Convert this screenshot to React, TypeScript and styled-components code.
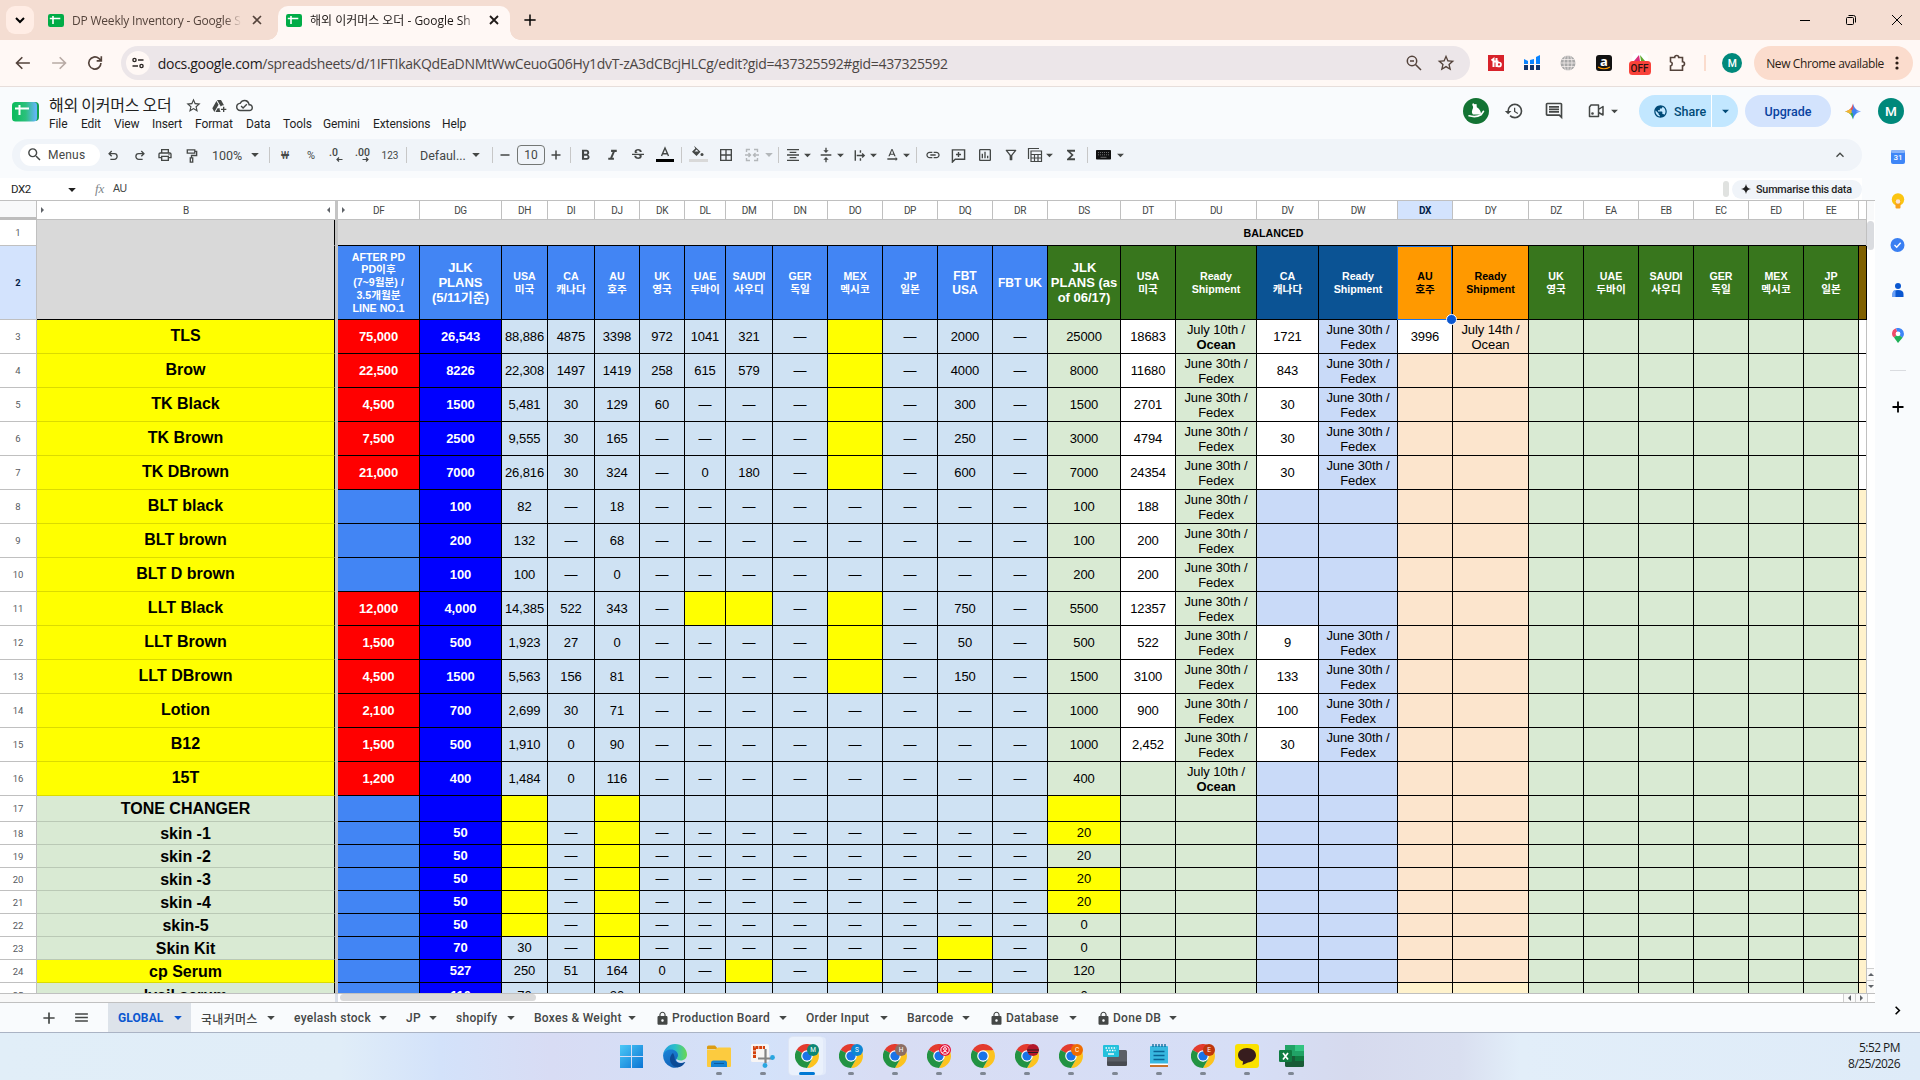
import type { ReactNode } from "react";
import styled, { createGlobalStyle, css } from "styled-components";
import * as Md from "react-icons/md";

const GlobalStyle = createGlobalStyle`
  * {
    box-sizing: border-box;
  }
  body {
    margin: 0;
    overflow: hidden;
    background: #f9fbfd;
    font-family: Roboto, "Noto Sans CJK KR", sans-serif;
  }
  svg {
    display: block;
    flex: none;
  }
`;

const Screen = styled.div`
  width: 1920px;
  height: 1080px;
  display: flex;
  flex-direction: column;
  overflow: hidden;
`;

/* ---------- browser ---------- */

const TabStrip = styled.div`
  height: 40px;
  background: #f4ddd2;
  display: flex;
  padding: 6px 0 0 6px;
  font-family: "Open Sans", "Noto Sans CJK KR", sans-serif;
`;

const TabSearch = styled.div`
  width: 28px;
  height: 28px;
  border-radius: 9px;
  background: #ffede5;
  display: flex;
  align-items: center;
  justify-content: center;
  margin-right: 6px;
`;

const BrowserTab = styled.div<{ $active?: boolean }>`
  width: ${(p) => (p.$active ? 232 : 238)}px;
  height: 34px;
  padding: 0 8px 6px;
  display: flex;
  align-items: center;
  position: relative;
  border-radius: 10px 10px 0 0;
  color: ${(p) => (p.$active ? "#1f1a18" : "#54433b")};
  background: ${(p) => (p.$active ? "#fff8f5" : "transparent")};
  ${(p) =>
    p.$active &&
    css`
      &::before,
      &::after {
        content: "";
        position: absolute;
        bottom: 0;
        width: 10px;
        height: 10px;
      }
      &::before {
        left: -10px;
        background: radial-gradient(circle at 0 0, transparent 9.5px, #fff8f5 10px);
      }
      &::after {
        right: -10px;
        background: radial-gradient(circle at 100% 0, transparent 9.5px, #fff8f5 10px);
      }
    `}
`;

const TabTitle = styled.div<{ $spacing: number }>`
  width: 170px;
  margin: 0 7px 0 8px;
  white-space: nowrap;
  font-size: 12px;
  letter-spacing: ${(p) => p.$spacing}px;
  mask-image: linear-gradient(to right, #000 90%, transparent);
`;

const NewTab = styled.div`
  padding: 5px 0 0 11px;
`;

const WindowButtons = styled.div`
  margin-left: auto;
  display: flex;
  height: 28px;
  svg {
    width: 46px;
    height: 28px;
  }
`;

const AddressRow = styled.div`
  height: 47px;
  background: #fff8f5;
  border-bottom: 1px solid #e7dedb;
  display: flex;
  align-items: center;
  padding: 0 7px 0 12px;
  color: #54433b;
  font-family: "Open Sans", sans-serif;
`;

const NavIcons = styled.div`
  display: flex;
  gap: 14px;
  width: 109px;
`;

const Omnibox = styled.div`
  width: 1351px;
  height: 34px;
  border-radius: 17px;
  background: #ece6e9;
  display: flex;
  align-items: center;
  gap: 13px;
  padding: 0 14px 0 5px;
`;

const SiteInfo = styled.div`
  width: 24px;
  height: 24px;
  border-radius: 50%;
  background: #fff8f5;
  display: flex;
  align-items: center;
  justify-content: center;
`;

const Url = styled.div`
  margin-left: -5px;
  flex: 1;
  font-size: 14px;
  letter-spacing: -0.32px;
  color: #4b4543;
  white-space: nowrap;
  b {
    font-weight: 400;
    color: #1c1a19;
  }
`;

const Extensions = styled.div`
  display: flex;
  align-items: center;
  margin-left: 18px;
`;

const Extension = styled.div<{ $w?: number; $drop?: number }>`
  width: ${(p) => p.$w ?? 36}px;
  padding-top: ${(p) => p.$drop ?? 0}px;
`;

const ExtensionDivider = styled.div`
  width: 2px;
  height: 16px;
  background: #fbdccd;
  margin: 0 16px 0 0;
`;

const Avatar = styled.div<{ $size: number }>`
  width: ${(p) => p.$size}px;
  height: ${(p) => p.$size}px;
  border-radius: 50%;
  background: #00897b;
  color: #fff;
  display: flex;
  align-items: center;
  justify-content: center;
  font: 500 ${(p) => p.$size * 0.52}px Roboto, sans-serif;
`;

const UpdatePill = styled.div`
  margin-left: 12px;
  width: 159px;
  height: 34px;
  border-radius: 17px;
  background: #fbdccd;
  color: #2b1c14;
  display: flex;
  align-items: center;
  padding-left: 12px;
  font-size: 12px;
  letter-spacing: -0.38px;
  white-space: nowrap;
  svg {
    margin-left: auto;
    margin-right: 7px;
  }
`;

/* ---------- document header ---------- */

const Workspace = styled.div`
  display: flex;
  height: 945px;
`;

const Main = styled.div`
  width: 1875px;
`;

const DocHeader = styled.div`
  height: 52px;
  display: flex;
  padding: 8px 0 0 12px;
  width: 1904px;
`;

const LogoBox = styled.div`
  padding-top: 7px;
`;

const DocTitle = styled.div`
  width: 1414px;
  margin-left: 10px;
`;

const TitleLine = styled.div`
  display: flex;
  align-items: center;
  height: 21px;
  color: #444746;
  svg {
    margin-right: 9px;
  }
`;

const TitleText = styled.div`
  width: 136px;
  padding-bottom: 4px;
  font: 400 16px "Noto Sans CJK KR", sans-serif;
  letter-spacing: -0.25px;
  color: #1f1f1f;
  white-space: nowrap;
`;

const MenuBar = styled.div`
  display: flex;
  height: 16px;
  align-items: center;
  font-size: 12px;
  letter-spacing: -0.1px;
  color: #1f1f1f;
`;

const MenuItem = styled.div<{ $w: number }>`
  width: ${(p) => p.$w}px;
  white-space: nowrap;
`;

const HeaderActions = styled.div`
  display: flex;
  align-items: center;
  height: 32px;
  color: #444746;
`;

const Collaborator = styled.div`
  width: 26px;
  height: 26px;
  border-radius: 50%;
  background: #137333;
  margin-right: 15px;
`;

const ActionIcon = styled.div<{ $w: number }>`
  width: ${(p) => p.$w}px;
  display: flex;
  align-items: center;
  gap: 5px;
`;

const ShareButton = styled.div`
  display: flex;
  width: 99px;
  height: 32px;
  border-radius: 16px;
  overflow: hidden;
  background: #c2e7ff;
  color: #004a77;
  font-size: 12.5px;
  font-weight: 500;
`;

const ShareLabel = styled.div`
  width: 73px;
  border-right: 1px solid #fff;
  display: flex;
  align-items: center;
  gap: 6px;
  padding-left: 14px;
`;

const ShareArrow = styled.div`
  flex: 1;
  display: flex;
  align-items: center;
  justify-content: center;
`;

const UpgradeButton = styled.div`
  width: 86px;
  height: 32px;
  border-radius: 16px;
  background: #d3e3fd;
  color: #0842a0;
  margin: 0 0 0 7px;
  display: flex;
  align-items: center;
  justify-content: center;
  font-size: 12.5px;
  font-weight: 500;
`;

const GeminiButton = styled.div`
  padding: 0 17px 0 14px;
`;

/* ---------- toolbar ---------- */

const Toolbar = styled.div`
  margin: 0 13px 0 12px;
  height: 32px;
  border-radius: 16px;
  background: #f0f4f9;
  display: flex;
  align-items: center;
  padding: 0 12px 0 8px;
  color: #444746;
`;

const MenusSearch = styled.div`
  width: 80px;
  height: 22px;
  border-radius: 11px;
  background: #fff;
  display: flex;
  align-items: center;
  gap: 5px;
  padding: 0 0 1px 6px;
  font-size: 12px;
  letter-spacing: 0.2px;
`;

const Tool = styled.div<{ $ml?: number; $w?: number; $faded?: boolean; $size?: number; $end?: boolean }>`
  width: ${(p) => p.$w ?? 20}px;
  margin-left: ${(p) => (p.$end ? "auto" : `${p.$ml ?? 0}px`)};
  opacity: ${(p) => (p.$faded ? 0.35 : 1)};
  font-size: ${(p) => p.$size ?? 12.5}px;
  display: flex;
  align-items: center;
  justify-content: center;
  flex: none;
  white-space: nowrap;
`;

const ToolLabel = styled(Tool)`
  justify-content: flex-start;
`;

const ToolDivider = styled.div<{ $ml: number }>`
  width: 1px;
  height: 16px;
  background: #c7c7c7;
  margin-left: ${(p) => p.$ml}px;
`;

const FontSize = styled.div`
  width: 28px;
  height: 20px;
  margin-left: 2px;
  border: 1px solid #747775;
  border-radius: 4px;
  display: flex;
  align-items: center;
  justify-content: center;
  font-size: 12px;
`;

/* ---------- formula bar ---------- */

const FormulaBar = styled.div`
  margin-top: 7px;
  width: 1862px;
  height: 22px;
  background: #fff;
  display: flex;
  align-items: center;
  font-size: 11.5px;
  color: #444746;
  padding-left: 11px;
`;

const NameBox = styled.div`
  width: 84px;
  display: flex;
  align-items: center;
  color: #1f1f1f;
  letter-spacing: -0.4px;
  svg {
    margin: 1px 0 0 36px;
  }
`;

const Fx = styled.div`
  width: 18px;
  font: italic 13px "Liberation Serif", serif;
  color: #80868b;
`;

const FormulaText = styled.div`
  flex: 1;
  padding-bottom: 2px;
  font-family: "Liberation Sans", sans-serif;
  font-size: 10.5px;
  letter-spacing: -0.5px;
`;

const FormulaHandle = styled.div`
  width: 6px;
  height: 16px;
  border-radius: 3px;
  background: #e0e2e0;
  margin-right: 3px;
`;

const Summarise = styled.div`
  width: 130px;
  height: 19px;
  border-radius: 10px;
  background: #f0f4f9;
  color: #1f1f1f;
  display: flex;
  align-items: center;
  gap: 5px;
  padding-left: 9px;
  font-size: 10.8px;
  letter-spacing: -0.2px;
  font-weight: 500;
  white-space: nowrap;
`;

/* ---------- sheet ---------- */

const COLS = [82, 82, 46, 47, 45, 45, 41, 47, 55, 55, 55, 55, 55, 73, 55, 81, 62, 79, 55, 76, 55, 55, 55, 55, 55, 55, 8];
const NAMES = "DF DG DH DI DJ DK DL DM DN DO DP DQ DR DS DT DU DV DW DX DY DZ EA EB EC ED EE".split(" ");
const TEMPLATE = "37px 298px 3px " + COLS.map((w) => w + "px").join(" ");

const SheetArea = styled.div`
  border-top: 1px solid #c0c0c0;
  height: 793px;
  display: flex;
  background: #fff;
`;

const Grid = styled.div`
  width: 1867px;
  height: 792px;
  overflow: hidden;
  font-family: "Liberation Sans", "Noto Sans CJK KR", sans-serif;
`;

const SheetRow = styled.div<{ $h: number }>`
  display: grid;
  grid-template-columns: ${TEMPLATE};
  height: ${(p) => p.$h}px;
`;

const ColHead = styled.div<{ $on?: boolean }>`
  border-right: 1px solid #c0c0c0;
  border-bottom: 1px solid #c0c0c0;
  background: ${(p) => (p.$on ? "#d3e3fd" : "#fff")};
  color: ${(p) => (p.$on ? "#041e49" : "#444746")};
  font: ${(p) => (p.$on ? 700 : 400)} 10px Roboto, sans-serif;
  letter-spacing: -0.4px;
  display: flex;
  align-items: center;
  justify-content: center;
`;

const Corner = styled.div`
  background: #f8f9fa;
  border-right: 1px solid #c0c0c0;
  border-bottom: 3px solid #bdbdbd;
`;

const HeadB = styled(ColHead)`
  justify-content: space-between;
  padding: 0 2px;
  border-right: none;
`;

const HeadDF = styled(ColHead)`
  justify-content: flex-start;
  padding-left: 2px;
  gap: 25px;
`;

const Freeze = styled.div`
  background: #c4c4c4;
`;

const RowHead = styled.div<{ $on?: boolean }>`
  border-right: 1px solid #c0c0c0;
  border-bottom: 1px solid #c0c0c0;
  background: ${(p) => (p.$on ? "#d3e3fd" : "#fff")};
  color: ${(p) => (p.$on ? "#041e49" : "#575b5f")};
  font: ${(p) => (p.$on ? 700 : 400)} 9.5px Roboto, sans-serif;
  display: flex;
  align-items: center;
  justify-content: center;
`;

const NameCell = styled.div<{ $bg: string; $line?: string; $low?: boolean }>`
  background: ${(p) => p.$bg};
  border-right: 1px solid #000;
  border-bottom: 1px solid ${(p) => p.$line ?? "rgba(0, 0, 0, 0.14)"};
  display: flex;
  align-items: center;
  justify-content: center;
  padding: ${(p) => (p.$low ? "1px 0 0" : "0 0 1px")};
  font-size: 16px;
  font-weight: 700;
  color: #000;
`;

const Cell = styled.div<{ $bg: string; $fg?: string; $bold?: boolean; $raise?: boolean }>`
  background: ${(p) => p.$bg};
  color: ${(p) => p.$fg ?? "#000"};
  font-weight: ${(p) => (p.$bold ? 700 : 400)};
  border-right: 1px solid #000;
  border-bottom: 1px solid #000;
  padding-bottom: ${(p) => (p.$raise ? 2 : 0)}px;
  display: flex;
  align-items: center;
  justify-content: center;
  text-align: center;
  white-space: pre;
  font-size: 13px;
  letter-spacing: -0.1px;
  line-height: 15px;
`;

const HeaderCell = styled(Cell)<{ $size?: number }>`
  font-weight: 700;
  font-size: ${(p) => p.$size ?? 10.67}px;
  line-height: ${(p) => (p.$size ? p.$size + 2 : 12.8)}px;
  letter-spacing: 0;
  position: relative;
`;

const BalancedBand = styled.div`
  grid-column: 4 / -1;
  background: #d9d9d9;
  border-bottom: 1px solid #000;
  padding-left: 342px;
  display: flex;
  align-items: center;
  justify-content: center;
  font-size: 10.67px;
  font-weight: 700;
`;

const Selection = styled.div`
  position: absolute;
  inset: 0 0 -1px -1px;
  border: 1px solid #1a73e8;
  &::after {
    content: "";
    position: absolute;
    right: -6px;
    bottom: -6px;
    width: 9px;
    height: 9px;
    border-radius: 50%;
    background: #0b57d0;
    border: 1px solid #fff;
    z-index: 2;
  }
`;

const VScroll = styled.div`
  width: 8px;
  border-left: 1px solid #c0c0c0;
  margin-left: -1px;
  display: flex;
  flex-direction: column;
  align-items: center;
  padding-top: 20px;
  background: linear-gradient(#f8f9fa 19px, #fff 19px);
`;

const VThumb = styled.div`
  width: 7px;
  height: 29px;
  border-radius: 4px;
  background: #dadce0;
  margin-bottom: auto;
`;

const ScrollArrow = styled.div<{ $w: number; $h: number }>`
  width: ${(p) => p.$w}px;
  height: ${(p) => p.$h}px;
  border: 1px solid #cfcfcf;
  border-width: ${(p) => (p.$w > p.$h ? "0 0 0 1px" : "1px 0 0 0")};
  background: #fafafa;
  display: flex;
  align-items: center;
  justify-content: center;
`;

const HScroll = styled.div`
  height: 10px;
  border: 1px solid #c0c0c0;
  border-width: 1px 0;
  display: flex;
  background: #fff;
`;

const HFrozen = styled.div`
  width: 338px;
  border-right: 3px solid #dadfe8;
  background: #f8f8f8;
`;

const HThumb = styled.div`
  margin: 0 auto 0 2px;
  width: 196px;
  height: 7px;
  border-radius: 4px;
  background: #dadada;
`;

const HEnd = styled.div`
  width: 8px;
  border-left: 1px solid #cfcfcf;
`;

/* ---------- sheet tabs ---------- */

const SheetTabs = styled.div`
  height: 29px;
  display: flex;
  align-items: center;
  background: #f9fbfd;
  color: #444746;
`;

const TabTools = styled.div`
  width: 108px;
  display: flex;
  gap: 15px;
  padding-left: 40px;
`;

const SheetTab = styled.div<{ $w: number; $active?: boolean }>`
  width: ${(p) => p.$w}px;
  height: 29px;
  padding: 1px 8px 0 10px;
  display: flex;
  align-items: center;
  gap: 2px;
  font-size: 12px;
  font-weight: ${(p) => (p.$active ? 700 : 500)};
  letter-spacing: ${(p) => (p.$active ? 0.1 : 0.28)}px;
  white-space: nowrap;
  color: ${(p) => (p.$active ? "#0b57d0" : "#444746")};
  background: ${(p) => (p.$active ? "#dde3ea" : "transparent")};
  svg:last-child {
    margin-left: auto;
  }
`;

const SidePanel = styled.div`
  width: 45px;
  padding-top: 61px;
  display: flex;
  flex-direction: column;
  align-items: center;
`;

const SideApp = styled.div<{ $h: number; $bottom?: boolean }>`
  height: ${(p) => p.$h}px;
  display: flex;
  align-items: center;
  flex: none;
  margin: ${(p) => (p.$bottom ? "auto 0 12px" : 0)};
`;

const SideLine = styled.div`
  width: 16px;
  height: 1px;
  background: #dadce0;
`;

/* ---------- taskbar ---------- */

const Taskbar = styled.div`
  height: 48px;
  border-top: 1px solid #aab3c4;
  display: flex;
  background: linear-gradient(to right, #e1eef8 0, #e0edf8 340px, #d3e2fa 440px, #d8dcf4 550px, #d5dff6 680px, #d3e2fa 760px, #d8ddf4 880px, #d6def6 1250px, #d6daee 1350px, #d9dff0 1460px, #e2eef9 1520px, #deebf8);
`;

const TaskIcons = styled.div`
  display: flex;
  margin-left: 609px;
`;

const TaskIcon = styled.div<{ $state?: "open" | "active" }>`
  width: 44px;
  height: 47px;
  position: relative;
  display: flex;
  align-items: center;
  justify-content: center;
  padding-bottom: 1px;
  > svg {
    z-index: 1;
  }
  ${(p) =>
    p.$state === "active" &&
    css`
      &::before {
        content: "";
        position: absolute;
        left: 4px;
        top: 4px;
        width: 34px;
        height: 38px;
        border-radius: 4px;
        background: #eaf1fc;
        box-shadow: 3px 0 0 #e2eafa, 0 0 0 1px #dde5f5;
      }
    `}
  ${(p) =>
    p.$state &&
    css`
      &::after {
        content: "";
        position: absolute;
        bottom: 5px;
        left: ${p.$state === "active" ? 14 : 19}px;
        width: ${p.$state === "active" ? 16 : 6}px;
        height: 3px;
        border-radius: 2px;
        background: ${p.$state === "active" ? "#0078d4" : "#7f8794"};
      }
    `}
`;

const Clock = styled.div`
  margin-left: auto;
  padding: 7px 20px 0 0;
  text-align: right;
  font: 12px/16px "Open Sans", sans-serif;
  letter-spacing: -0.55px;
  color: #1b1b1b;
`;

/* ---------- drawings ---------- */

const Arrow = ({ size = 10 }: { size?: number }) => (
  <svg width={size} height={size} viewBox="0 0 10 10">
    <path d="M1.2 3h7.6L5 7z" fill="currentColor" />
  </svg>
);

const Tri = ({ dir }: { dir: "left" | "right" | "up" | "down" }) => {
  const d = {
    left: "M5 1v6L2 4z",
    right: "M2 1v6l3-3z",
    up: "M1 5h6L4 2z",
    down: "M1 2h6L4 5z",
  };
  return (
    <svg width="8" height="8" viewBox="0 0 8 8">
      <path d={d[dir]} fill="#5f6368" />
    </svg>
  );
};

const Line = ({ d, size = 16, w = 1.5 }: { d: string; size?: number; w?: number }) => (
  <svg width={size} height={size} viewBox="0 0 16 16" fill="none" stroke="currentColor" strokeWidth={w}>
    <path d={d} />
  </svg>
);

const Favicon = () => (
  <svg width="16" height="13" viewBox="0 0 16 13">
    <rect width="16" height="13" rx="2.2" fill="#00ac47" />
    <path d="M1.8 4.5h10.5M5 2v8" stroke="#fff" strokeWidth="1.6" />
  </svg>
);

const SheetsLogo = () => (
  <svg width="27" height="20" viewBox="0 0 27 20">
    <defs>
      <linearGradient id="logo">
        <stop offset="0.1" stopColor="#0fbc5f" />
        <stop offset="0.55" stopColor="#2cc07c" />
        <stop offset="0.95" stopColor="#62b5f4" />
      </linearGradient>
    </defs>
    <rect x="2" width="25" height="19" rx="4" fill="#12a150" />
    <rect width="25" height="19.5" rx="3.5" fill="url(#logo)" />
    <path d="M3 6.5h14M7.5 3v10" stroke="#fff" strokeWidth="2" />
  </svg>
);

const Chrome = ({ badge, letter }: { badge?: string; letter?: string }) => (
  <svg width="24" height="24" viewBox="0 0 24 24">
    <path d="M12 12 1.6 6A12 12 0 0 1 22.4 6z" fill="#e33b2e" />
    <path d="M12 6.2h10.5A12 12 0 0 1 12 24l5.200-9z" fill="#fcc31e" />
    <path d="M6.800 15 1.600 6l5.600 3L12 17.800l5.200-2.800L12 24A12 12 0 0 1 1.600 6z" fill="#229342" />
    <circle cx="12" cy="12" r="5.8" fill="#fff" />
    <circle cx="12" cy="12" r="4.6" fill="#1a73e8" />
    {badge && <circle cx="18" cy="6" r="6" fill={badge} />}
    {letter && (
      <text x="18" y="8.4" fontSize="6.5" fontFamily="Roboto, sans-serif" fill="#fff" textAnchor="middle">
        {letter}
      </text>
    )}
    {badge === "#e5173f" && (
      <g fill="none" stroke="#fff" strokeWidth="1">
        <circle cx="18" cy="6" r="4.2" />
        <circle cx="18" cy="5" r="1.4" />
        <path d="M15.5 8.6q2.5-3 5 0" />
      </g>
    )}
    {badge === "#b3182b" && <path d="M12.2 6h11.6M13 8.5h10" stroke="#2a1c22" strokeWidth="1.2" />}
  </svg>
);

const WindowsLogo = () => (
  <svg width="23" height="23" viewBox="0 0 23 23">
    <defs>
      <linearGradient id="win" x1="0" y1="0" x2="1" y2="1">
        <stop stopColor="#4cc9f7" />
        <stop offset="1" stopColor="#0a74d4" />
      </linearGradient>
    </defs>
    <path d="M0 0h11v11H0zM12 0h11v11H12zM0 12h11v11H0zM12 12h11v11H12z" fill="url(#win)" />
  </svg>
);

const EdgeLogo = () => (
  <svg width="24" height="24" viewBox="0 0 24 24">
    <defs>
      <linearGradient id="edgeTop">
        <stop stopColor="#249be0" />
        <stop offset="0.5" stopColor="#2bbfc9" />
        <stop offset="1" stopColor="#6ad84f" />
      </linearGradient>
      <linearGradient id="edgeBody" x1="0" y1="0" x2="0.6" y2="1">
        <stop stopColor="#1b86dc" />
        <stop offset="1" stopColor="#1160b4" />
      </linearGradient>
    </defs>
    <path d="M.1 11C1 6 5 4 9 4c5 0 8 3 8 7l-4 5c1 3 5 4 9.300 2A12 12 0 0 1 .1 11z" fill="url(#edgeBody)" />
    <path d="M10 9c-4 3-4.500 10 1.500 13.500 4 1.500 8 .5 10.800-4.500-4 2.300-8.500 1.500-10-1.500-1-2.500-.5-5-2.300-7.500z" fill="#0c4a95" />
    <path d="M.1 11A12 12 0 0 1 12 0c7 0 12 4.800 12 10.500 0 3.800-2.800 6-6.300 6-2.700 0-4-1-4-1.900 0-.7 1.300-1.300 1.300-3.300C15 8 12 5.500 8 5.500 4.500 5.500 1 7.500.1 11z" fill="url(#edgeTop)" />
  </svg>
);

const FolderIcon = () => (
  <svg width="24" height="23" viewBox="0 0 24 23">
    <path d="M0 2A1.500 1.500 0 0 1 1.500.5H8L11 4H0z" fill="#dd9c12" />
    <path d="M0 4.500h8l3-2h12a1 1 0 0 1 1 1V21a1 1 0 0 1-1 1H1a1 1 0 0 1-1-1z" fill="#fccb3f" />
    <path d="M4 22v-4a2.500 2.500 0 0 1 2.500-2.500h11A2.500 2.500 0 0 1 20 18v4z" fill="#1583d3" />
    <path d="M7 18.500h10" stroke="#0b5a9d" />
  </svg>
);

const SnipIcon = () => (
  <svg width="24" height="24" viewBox="0 0 24 24">
    <rect width="18" height="18" rx="1.5" fill="#f7f5f4" />
    <path d="M3.500 14V3.500H14" fill="none" stroke="#d4410c" strokeWidth="3" strokeDasharray="3 .8" />
    <path d="M14.500 5v14M7 14.500h15" fill="none" stroke="#838383" strokeWidth="2.2" />
    <circle cx="21.5" cy="13.5" r="2.4" fill="#2aa6e0" />
    <circle cx="14" cy="21.5" r="2.4" fill="#2aa6e0" />
  </svg>
);

const KeyboardApp = () => (
  <svg width="24" height="24" viewBox="0 0 24 24">
    <rect x="4" y="6" width="20" height="16" rx="1.5" fill="#5b5f66" />
    <path d="M4 17.500h20V20a2 2 0 0 1-2 2H6a2 2 0 0 1-2-2z" fill="#474a50" />
    <rect x="0" y="1" width="16" height="12" rx="1" fill="#23c1dc" />
    <path d="M2.500 4h11M3.500 6.500h9" stroke="#fff" strokeWidth="1.3" strokeDasharray="1.5 1.2" />
    <path d="M5 10h6" stroke="#fff" strokeWidth="1.4" />
  </svg>
);

const NotepadIcon = () => (
  <svg width="20" height="24" viewBox="0 0 20 24">
    <rect x="1" y="20" width="18" height="3" fill="#c9732b" />
    <rect x="1" y="2" width="18" height="19" rx="1" fill="#38b8e0" />
    <rect x="1" y="19.5" width="18" height="1.5" fill="#fff" />
    <path d="M4 0v3M7 0v3M10 0v3M13 0v3M16 0v3" stroke="#136f9e" strokeWidth="1.4" />
    <path d="M4.500 7.500h11M4.500 11.500h11M4.500 15.500h11" stroke="#0a6395" strokeWidth="1.6" />
  </svg>
);

const KakaoIcon = () => (
  <svg width="24" height="24" viewBox="0 0 24 24">
    <rect width="24" height="24" rx="3" fill="#fae100" />
    <path d="M12 4c5 0 9 3 9 7.200s-4 7-8 7.200L7.500 21l.6-3.500C5 16.400 3 14 3 11.200 3 7 7 4 12 4z" fill="#371d1e" />
  </svg>
);

const ExcelIcon = () => (
  <svg width="25" height="22" viewBox="0 0 25 22">
    <rect x="6" width="19" height="22" rx="1.5" fill="#185c37" />
    <path d="M6 0h10v11H6z" fill="#21a366" />
    <path d="M16 0h9v6h-9z" fill="#33c481" />
    <path d="M16 6h9v5h-9z" fill="#21a366" />
    <path d="M16 11h9v5h-9z" fill="#107c41" />
    <rect y="5" width="13" height="12" rx="1.2" fill="#107c41" />
    <path d="M4 8l5 6.500M9 8l-5 6.500" stroke="#fff" strokeWidth="1.7" />
  </svg>
);

const Spark = () => (
  <svg width="10" height="10" viewBox="0 0 16 16">
    <path d="M8 0c.9 5 3 7.100 8 8-5 .9-7.100 3-8 8-.9-5-3-7.100-8-8 5-.9 7.100-3 8-8z" fill="#1f1f1f" />
  </svg>
);

const Gemini = () => (
  <svg width="16" height="17" viewBox="0 0 16 16">
    <defs>
      <linearGradient id="gemBlue">
        <stop stopColor="#3c7ff0" />
        <stop offset="1" stopColor="#5a9bfb" />
      </linearGradient>
    </defs>
    <path d="M8 0c1.200 4.500 3.500 6.800 8 8H8z" fill="#5b7fe8" />
    <path d="M8 0C6.800 4.500 4.500 6.800 0 8h8z" fill="#e0565a" />
    <path d="M0 8c4.500 1.200 6.800 3.500 8 8V8z" fill="#35ab5e" />
    <path d="M16 8c-4.500 1.200-6.800 3.500-8 8V8z" fill="url(#gemBlue)" />
    <path d="M0 8c2.500-.7 4-1.600 5-2.500L8 8l-3 2.500C4 9.600 2.500 8.700 0 8z" fill="#f2b632" />
    <circle cx="9" cy="8" r="2.4" fill="#3f83f2" />
  </svg>
);

/* ---------- data ---------- */

const BLUE = "#4285f4";
const DEEP = "#0000ff";
const RED = "#ff0000";
const SKY = "#cfe2f3";
const YELLOW = "#ffff00";
const GREEN = "#d9ead3";
const FOREST = "#38761d";
const NAVY = "#0b5394";
const ORANGE = "#ff9900";
const PERI = "#c9daf8";
const PEACH = "#fce5cd";
const CREAM = "#fff2cc";

// one string per row: DF to DV separated by "|", y = yellow cell, - = long dash, f = fedex
const rows: [string, string][] = [
  ["TLS", "75,000|26,543|88,886|4875|3398|972|1041|321|-|y|-|2000|-|25000|18683|July 10th /*Ocean|1721"],
  ["Brow", "22,500|8226|22,308|1497|1419|258|615|579|-|y|-|4000|-|8000|11680|f|843"],
  ["TK Black", "4,500|1500|5,481|30|129|60|-|-|-|y|-|300|-|1500|2701|f|30"],
  ["TK Brown", "7,500|2500|9,555|30|165|-|-|-|-|y|-|250|-|3000|4794|f|30"],
  ["TK DBrown", "21,000|7000|26,816|30|324|-|0|180|-|y|-|600|-|7000|24354|f|30"],
  ["BLT black", "|100|82|-|18|-|-|-|-|-|-|-|-|100|188|f|"],
  ["BLT brown", "|200|132|-|68|-|-|-|-|-|-|-|-|100|200|f|"],
  ["BLT D brown", "|100|100|-|0|-|-|-|-|-|-|-|-|200|200|f|"],
  ["LLT Black", "12,000|4,000|14,385|522|343|-|y|y|-|y|-|750|-|5500|12357|f|"],
  ["LLT Brown", "1,500|500|1,923|27|0|-|-|-|-|y|-|50|-|500|522|f|9"],
  ["LLT DBrown", "4,500|1500|5,563|156|81|-|-|-|-|y|-|150|-|1500|3100|f|133"],
  ["Lotion", "2,100|700|2,699|30|71|-|-|-|-|-|-|-|-|1000|900|f|100"],
  ["B12", "1,500|500|1,910|0|90|-|-|-|-|-|-|-|-|1000|2,452|f|30"],
  ["15T", "1,200|400|1,484|0|116|-|-|-|-|-|-|-|-|400||July 10th /*Ocean|"],
  ["TONE CHANGER", "||y||y|||||||||y|||"],
  ["skin -1", "|50|y|-|y|-|-|-|-|-|-|-|-|y20|||"],
  ["skin -2", "|50|y|-|y|-|-|-|-|-|-|-|-|20|||"],
  ["skin -3", "|50|y|-|y|-|-|-|-|-|-|-|-|y20|||"],
  ["skin -4", "|50|y|-|y|-|-|-|-|-|-|-|-|y20|||"],
  ["skin-5", "|50|y|-|y|-|-|-|-|-|-|-|-|0|||"],
  ["Skin Kit", "|70|30|-|y|-|-|-|-|-|-|y|-|0|||"],
  ["cp Serum", "|527|250|51|164|0|-|y|-|y|-|-|-|120|||"],
  ["lysil serum", "|110|70|-|20|-|-|-|-|-|-|y|-|0|||"],
];

const rowHeight = (r: number) => {
  if (r < 14) return 34;
  if (r === 14 || r === 22) return 26;
  return 23;
};

const heads: [string, string, number?, string?][] = [
  ["AFTER PD\nPD이후\n(7~9월분) /\n3.5개월분\nLINE NO.1", BLUE],
  ["JLK\nPLANS\n(5/11기준)", BLUE, 13],
  ["USA\n미국", BLUE],
  ["CA\n캐나다", BLUE],
  ["AU\n호주", BLUE],
  ["UK\n영국", BLUE],
  ["UAE\n두바이", BLUE],
  ["SAUDI\n사우디", BLUE],
  ["GER\n독일", BLUE],
  ["MEX\n멕시코", BLUE],
  ["JP\n일본", BLUE],
  ["FBT\nUSA", BLUE, 12],
  ["FBT UK", BLUE, 12],
  ["JLK\nPLANS (as\nof 06/17)", FOREST, 13],
  ["USA\n미국", FOREST],
  ["Ready\nShipment", FOREST],
  ["CA\n캐나다", NAVY],
  ["Ready\nShipment", NAVY],
  ["AU\n호주", ORANGE, undefined, "#000"],
  ["Ready\nShipment", ORANGE, undefined, "#000"],
  ["UK\n영국", FOREST],
  ["UAE\n두바이", FOREST],
  ["SAUDI\n사우디", FOREST],
  ["GER\n독일", FOREST],
  ["MEX\n멕시코", FOREST],
  ["JP\n일본", FOREST],
  ["", "#7f6000"],
];

const fedex = "June 30th /\nFedex";

const cellOf = (r: number, c: number, raw: string): ReactNode => {
  let bg = SKY;
  let fg = "#000";
  let text: ReactNode = raw;
  if (c === 0) bg = raw ? RED : BLUE;
  if (c === 1) bg = DEEP;
  if (c < 2) fg = "#fff";
  if (c === 13 || c === 15 || c > 19) bg = GREEN;
  if (c === 14) bg = raw ? "#fff" : GREEN;
  if (c === 16) bg = raw ? "#fff" : PERI;
  if (c === 17) {
    bg = PERI;
    if (r < 5 || (r > 8 && r < 13)) text = fedex;
  }
  if (c === 18 || c === 19) {
    bg = r === 22 ? CREAM : PEACH;
    if (r === 0) {
      text = c === 18 ? "3996" : "July 14th /\nOcean";
      if (c === 18) bg = "#fff";
    }
  }
  if (c === 26) bg = r < 5 ? "#fff" : CREAM;
  if (raw.startsWith("y")) {
    bg = YELLOW;
    text = raw.slice(1);
  }
  if (raw === "-") text = "—";
  if (raw === "f") text = fedex;
  if (raw.includes("*")) {
    const [a, b] = raw.split("*");
    text = (
      <span>
        {a}
        {"\n"}
        <b>{b}</b>
      </span>
    );
  }
  return (
    <Cell key={c} $bg={bg} $fg={fg} $bold={c < 2} $raise={r > 14 && r < 22}>
      {text}
    </Cell>
  );
};

const menus: [string, number][] = [
  ["File", 32],
  ["Edit", 33],
  ["View", 38],
  ["Insert", 43],
  ["Format", 51],
  ["Data", 37],
  ["Tools", 40],
  ["Gemini", 50],
  ["Extensions", 69],
  ["Help", 40],
];

const sheetTabs: [string, number, boolean?][] = [
  ["국내커머스", 93],
  ["eyelash stock", 112],
  ["JP", 50],
  ["shopify", 78],
  ["Boxes & Weight", 121],
  ["Production Board", 151, true],
  ["Order Input", 101],
  ["Barcode", 82],
  ["Database", 107, true],
  ["Done DB", 100, true],
];

/* ---------- parts ---------- */

const Browser = () => (
  <>
    <TabStrip>
      <TabSearch>
        <Line d="M4 6l4 4 4-4" w={2} />
      </TabSearch>
      <BrowserTab>
        <Favicon />
        <TabTitle $spacing={-0.2}>DP Weekly Inventory - Google S</TabTitle>
        <Line d="M4 4l8 8M12 4l-8 8" w={1.6} />
      </BrowserTab>
      <BrowserTab $active>
        <Favicon />
        <TabTitle $spacing={-0.02}>해외 이커머스 오더 - Google Sh</TabTitle>
        <Line d="M4 4l8 8M12 4l-8 8" w={1.8} />
      </BrowserTab>
      <NewTab>
        <Line d="M8 3v10M3 8h10" size={18} w={1.3} />
      </NewTab>
      <WindowButtons>
        <svg viewBox="0 0 46 28">
          <path d="M18 14.500h10" stroke="#000" />
        </svg>
        <svg viewBox="0 0 46 28" fill="none" stroke="#000">
          <rect x="18.5" y="11.5" width="7" height="7" rx="1" />
          <path d="M20.500 9.500h5a2 2 0 0 1 2 2v5" />
        </svg>
        <svg viewBox="0 0 46 28">
          <path d="M18 9l10 10M28 9l-10 10" stroke="#000" />
        </svg>
      </WindowButtons>
    </TabStrip>
    <AddressRow>
      <NavIcons>
        <Line size={22} d="M13 8H3.500M7.500 3.800L3.300 8l4.200 4.200" w={1.2} />
        <svg width="22" height="22" viewBox="0 0 16 16" fill="none" stroke="#b8aaa4" strokeWidth="1.2">
          <path d="M3 8h9.500M8.500 3.800L12.700 8l-4.200 4.200" />
        </svg>
        <Line size={22} d="M12.300 8a4.400 4.400 0 1 1-1.500-3.300L12.500 6.200M12.600 3v3.400H9.200" w={1.2} />
      </NavIcons>
      <Omnibox>
        <SiteInfo>
          <svg width="14" height="14" viewBox="0 0 14 14" fill="none" stroke="#2b2523" strokeWidth="1.4">
            <circle cx="3.5" cy="4" r="1.6" />
            <path d="M7 4h5.500M1.500 10H7" />
            <circle cx="10.5" cy="10" r="1.6" />
          </svg>
        </SiteInfo>
        <Url>
          <b>docs.google.com</b>/spreadsheets/d/1IFTIkaKQdEaDNMtWwCeuoG06Hy1dvT-zA3dCBcjHLCg/edit?gid=437325592#gid=437325592
        </Url>
        <svg width="18" height="18" viewBox="0 0 18 18" fill="none" stroke="#54433b" strokeWidth="1.5">
          <circle cx="7" cy="7" r="4.7" />
          <path d="M10.500 10.500L16 16M5 7h4" />
        </svg>
        <Md.MdStarOutline size={20} />
      </Omnibox>
      <Extensions>
        <Extension>
          <svg width="16" height="16" viewBox="0 0 16 16">
            <rect width="16" height="16" fill="#d8222a" />
            <path d="M3.500 5.500l2-1.500v8M8.500 3v9M6.500 6.500h4" fill="none" stroke="#fff" strokeWidth="2" />
            <circle cx="11" cy="9.5" r="2" fill="none" stroke="#fff" strokeWidth="1.7" />
          </svg>
        </Extension>
        <Extension>
          <svg width="16" height="16" viewBox="0 0 16 16">
            <path d="M0 4l4 2v3H0zM6 5l4-1v5H6zM12 2l4-2v9h-4z" fill="#0a84ff" />
            <path d="M0 10h4v5H0zM6 10h4v5H6zM12 10h4v5h-4z" fill="#12356b" />
          </svg>
        </Extension>
        <Extension>
          <svg width="16" height="16" viewBox="0 0 16 16" fill="none">
            <circle cx="8" cy="8" r="7.5" fill="#a9a9a9" />
            <path d="M0 8h16M8 0v16M1.500 4.500h13M1.500 11.500h13" stroke="#f4eeec" strokeWidth=".8" />
            <ellipse cx="8" cy="8" rx="4" ry="8" stroke="#f4eeec" strokeWidth=".8" />
          </svg>
        </Extension>
        <Extension $w={33}>
          <svg width="16" height="16" viewBox="0 0 16 16">
            <rect width="16" height="16" rx="3" fill="#111" />
            <text x="8" y="11" fontSize="13" fontWeight="700" fontFamily="Open Sans, sans-serif" fill="#fff" textAnchor="middle">
              a
            </text>
            <path d="M2 12q6 3.500 12 0" fill="none" stroke="#f90" strokeWidth="1.2" />
          </svg>
        </Extension>
        <Extension $w={39} $drop={4}>
          <svg width="22" height="24" viewBox="0 0 22 24">
            <rect x="3" width="16" height="14" rx="5" fill="#fff" />
            <path d="M5 8l5-6 1 6z" fill="#d92d7b" />
            <path d="M11 2l5 6h-4z" fill="#5fa82e" />
            <rect y="8" width="22" height="14" rx="3.5" fill="#f9423a" />
            <text x="10.500" y="18.500" fontSize="10" fontWeight="500" fontFamily="Roboto, sans-serif" fill="#2a1110" textAnchor="middle">
              OFF
            </text>
          </svg>
        </Extension>
        <Extension>
          <svg width="18" height="18" viewBox="0 0 18 18" fill="none" stroke="#54433b" strokeWidth="1.6">
            <path d="M2.500 3.500h4.200a2 2 0 0 1 4 0h3.800v4.300a2 2 0 0 1 0 4v4.400h-12v-4.200a2.200 2.200 0 0 0 0-4.300z" />
          </svg>
        </Extension>
      </Extensions>
      <ExtensionDivider />
      <Avatar $size={20}>M</Avatar>
      <UpdatePill>
        New Chrome available
        <svg width="18" height="18" viewBox="0 0 18 18" fill="#2b1c14">
          <circle cx="9" cy="4" r="1.6" />
          <circle cx="9" cy="9" r="1.6" />
          <circle cx="9" cy="14" r="1.6" />
        </svg>
      </UpdatePill>
    </AddressRow>
  </>
);

const Header = () => (
  <DocHeader>
    <LogoBox>
      <SheetsLogo />
    </LogoBox>
    <DocTitle>
      <TitleLine>
        <TitleText>해외 이커머스 오더</TitleText>
        <Md.MdStarOutline size={17} />
        <Md.MdOutlineAddToDrive size={16} />
        <Md.MdOutlineCloudDone size={17} />
      </TitleLine>
      <MenuBar>
        {menus.map(([name, w]) => (
          <MenuItem key={name} $w={w}>
            {name}
          </MenuItem>
        ))}
      </MenuBar>
    </DocTitle>
    <HeaderActions>
      <Collaborator>
        <svg width="26" height="26" viewBox="0 0 26 26">
          <path d="M10 5l1.500 1.300 2-.3.3 3.200c2.500 1.500 4.500 4 4.200 7.300h-8c-.8-1-1.300-2-1-3.500.6-2.500 1.400-3 1-4.500l-.8-1.700z" fill="#fff" />
          <path d="M6 17.800q7 2 12-1l2.500-3.500" fill="none" stroke="#fff" strokeWidth="1.6" strokeLinecap="round" />
        </svg>
      </Collaborator>
      <ActionIcon $w={40}>
        <Md.MdHistory size={20} />
      </ActionIcon>
      <ActionIcon $w={43}>
        <Md.MdOutlineComment size={20} />
      </ActionIcon>
      <ActionIcon $w={52}>
        <svg width="18" height="18" viewBox="0 0 18 18" fill="none" stroke="#444746" strokeWidth="1.5">
          <path d="M4 3h7.500v11.500H2.500V5zM11.500 7.500L16 4.500v8.500l-4.500-2.500" strokeLinejoin="round" />
          <circle cx="5.500" cy="11.500" r=".6" fill="#444746" />
        </svg>
        <Arrow size={9} />
      </ActionIcon>
      <ShareButton>
        <ShareLabel>
          <Md.MdPublic size={15} />
          Share
        </ShareLabel>
        <ShareArrow>
          <Arrow size={9} />
        </ShareArrow>
      </ShareButton>
      <UpgradeButton>Upgrade</UpgradeButton>
      <GeminiButton>
        <Gemini />
      </GeminiButton>
      <Avatar $size={26}>M</Avatar>
    </HeaderActions>
  </DocHeader>
);

const Tools = () => (
  <Toolbar>
    <MenusSearch>
      <Md.MdSearch size={17} />
      Menus
    </MenusSearch>
    <Tool $ml={3}>
      <Line size={14} d="M6.500 3.500L3.500 6.500l3 3M3.800 6.500H9.500a3.200 3.200 0 0 1 0 6.400H5" />
    </Tool>
    <Tool $ml={7}>
      <Line size={14} d="M9.500 3.500l3 3-3 3M12.200 6.500H6.500a3.200 3.200 0 0 0 0 6.400H11" />
    </Tool>
    <Tool $ml={5}>
      <Md.MdOutlinePrint size={16} />
    </Tool>
    <Tool $ml={6}>
      <Line d="M3.500 2h8v3.500h-8zM11.500 3.500h2V8H8v2.500M6.700 10.500h2.600V15H6.700z" size={15} w={1.4} />
    </Tool>
    <ToolLabel $ml={11} $w={38}>100%</ToolLabel>
    <Tool $w={10}><Arrow /></Tool>
    <ToolDivider $ml={9} />
    <Tool $ml={5} $size={11}>₩</Tool>
    <Tool $ml={6} $size={11}>%</Tool>
    <Tool $ml={6}>
      <svg width="18" height="18" viewBox="0 0 18 18">
        <text x="1" y="10" fontSize="10.500" fontFamily="Roboto, sans-serif" fontWeight="500" fill="#444746">.0</text>
        <path d="M14.500 13.500H9M11 11.500l-2 2 2 2" stroke="#444746" strokeWidth="1.2" fill="none" />
      </svg>
    </Tool>
    <Tool $ml={7}>
      <svg width="18" height="18" viewBox="0 0 18 18">
        <text x="0" y="10" fontSize="10.500" fontFamily="Roboto, sans-serif" fontWeight="500" fill="#444746">.00</text>
        <path d="M7.500 13.500H13M11 11.500l2 2-2 2" stroke="#444746" strokeWidth="1.2" fill="none" />
      </svg>
    </Tool>
    <Tool $ml={4} $w={24} $size={10}>123</Tool>
    <ToolDivider $ml={4} />
    <ToolLabel $ml={13} $w={50}>Defaul...</ToolLabel>
    <Tool $ml={1} $w={10}><Arrow /></Tool>
    <ToolDivider $ml={11} />
    <Tool $ml={2}><Line d="M3.500 8h9" /></Tool>
    <FontSize>10</FontSize>
    <Tool $ml={1}><Line d="M3.500 8h9M8 3.500v9" /></Tool>
    <ToolDivider $ml={4} />
    <Tool $ml={4}><Md.MdFormatBold size={17} /></Tool>
    <Tool $ml={7}><Md.MdFormatItalic size={17} /></Tool>
    <Tool $ml={6}><Md.MdStrikethroughS size={16} /></Tool>
    <Tool $ml={7}>
      <svg width="18" height="20" viewBox="0 0 18 20">
        <path d="M5.500 11L9 3l3.500 8M6.500 8.800h5" fill="none" stroke="#444746" strokeWidth="1.4" />
        <rect x="0" y="14" width="18" height="3" fill="#000" />
      </svg>
    </Tool>
    <ToolDivider $ml={6} />
    <Tool $ml={6}>
      <svg width="19" height="20" viewBox="0 0 19 20">
        <path d="M5 .8l6.500 6L7.500 11 3 6.800 6.300 3.500z" fill="#444746" />
        <path d="M5.500 6.600h4L7.600 4.600z" fill="#f0f4f9" />
        <circle cx="13" cy="9.500" r="1.5" fill="#444746" />
        <rect y="14" width="19" height="3" fill="#d9d9d9" />
      </svg>
    </Tool>
    <Tool $ml={8}><Md.MdBorderAll size={16} /></Tool>
    <Tool $ml={6} $faded>
      <Line d="M6 2.500H2.500V5M10 2.500h3.500V5M6 13.500H2.500V11M10 13.500h3.500V11M1 8h5M4.500 6L6.500 8l-2 2M15 8h-5M11.500 6l-2 2 2 2" w={1.4} />
    </Tool>
    <Tool $ml={2} $w={10} $faded><Arrow /></Tool>
    <ToolDivider $ml={4} />
    <Tool $ml={4}><Md.MdFormatAlignCenter size={16} /></Tool>
    <Tool $ml={-1} $w={10}><Arrow size={9} /></Tool>
    <Tool $ml={4}><Md.MdVerticalAlignCenter size={16} /></Tool>
    <Tool $ml={-1} $w={10}><Arrow size={9} /></Tool>
    <Tool $ml={4}><Line d="M3.500 2.500v11M9 2.500V5M9 11v2.500M5 8h8M10.800 5.800L13 8l-2.200 2.200" size={15} /></Tool>
    <Tool $ml={-1} $w={10}><Arrow size={9} /></Tool>
    <Tool $ml={4}><Md.MdTextRotationNone size={16} /></Tool>
    <Tool $ml={-1} $w={10}><Arrow size={9} /></Tool>
    <ToolDivider $ml={5} />
    <Tool $ml={6}><Md.MdLink size={16} /></Tool>
    <Tool $ml={5}>
      <Line size={15} d="M1.500 15V2h13v10h-10zM8 4.300v5.400M5.300 7h5.400" />
    </Tool>
    <Tool $ml={7}><Md.MdOutlineInsertChart size={16} /></Tool>
    <Tool $ml={6}><Md.MdOutlineFilterAlt size={16} /></Tool>
    <Tool $ml={4}>
      <Line size={16} d="M1.500 12V1.500H12M4 4h10.500v10.500H4zM4 7.500h10.500M4 11h10.500M7.500 7.500v7M11 7.500v7" w={1.2} />
    </Tool>
    <Tool $ml={-1} $w={10}><Arrow size={9} /></Tool>
    <Tool $ml={7}><Md.MdFunctions size={16} /></Tool>
    <ToolDivider $ml={6} />
    <Tool $ml={5}>
      <svg width="15" height="10" viewBox="0 0 15 10">
        <rect width="15" height="9.5" rx=".8" fill="#111" />
        <path d="M2 2.500h11M2 4.800h11" stroke="#777" strokeWidth=".9" strokeDasharray="1 1" />
        <path d="M4.500 7.300h6" stroke="#777" strokeWidth=".9" />
      </svg>
    </Tool>
    <Tool $ml={2} $w={10}><Arrow size={9} /></Tool>
    <Tool $end>
      <Line size={14} d="M4 10l4-4 4 4" />
    </Tool>
  </Toolbar>
);

const Sheet = () => (
  <SheetArea>
    <Grid>
      <SheetRow $h={19}>
        <Corner />
        <HeadB>
          <Tri dir="right" />
          B
          <Tri dir="left" />
        </HeadB>
        <Freeze />
        <HeadDF>
          <Tri dir="right" />
          DF
        </HeadDF>
        {NAMES.slice(1).map((n) => (
          <ColHead key={n} $on={n === "DX"}>
            {n}
          </ColHead>
        ))}
        <ColHead />
      </SheetRow>
      <SheetRow $h={26}>
        <RowHead>1</RowHead>
        <NameCell $bg="#d9d9d9" $line="#d9d9d9" />
        <Freeze />
        <BalancedBand>BALANCED</BalancedBand>
      </SheetRow>
      <SheetRow $h={74}>
        <RowHead $on>2</RowHead>
        <NameCell $bg="#d9d9d9" $line="#000" />
        <Freeze />
        {heads.map(([text, bg, size, fg], i) => (
          <HeaderCell key={i} $bg={bg} $fg={fg ?? "#fff"} $size={size}>
            {text}
            {i === 18 && <Selection />}
          </HeaderCell>
        ))}
      </SheetRow>
      {rows.map(([name, line], r) => {
        const values = line.split("|");
        return (
          <SheetRow key={name} $h={rowHeight(r)}>
            <RowHead>{r + 3}</RowHead>
            <NameCell $bg={r < 14 || r === 21 ? YELLOW : GREEN} $low={r > 13}>
              {name}
            </NameCell>
            <Freeze />
            {COLS.map((_, c) => cellOf(r, c, values[c] ?? ""))}
          </SheetRow>
        );
      })}
    </Grid>
    <VScroll>
      <VThumb />
      <ScrollArrow $w={7} $h={12}>
        <Tri dir="up" />
      </ScrollArrow>
      <ScrollArrow $w={7} $h={13}>
        <Tri dir="down" />
      </ScrollArrow>
    </VScroll>
  </SheetArea>
);

const Side = () => (
  <SidePanel>
    <SideApp $h={17}>
      <svg width="14" height="14" viewBox="0 0 14 14">
        <rect width="14" height="14" rx="2" fill="#3f86f7" />
        <rect width="14" height="3" rx="1.5" fill="#8ab4f8" />
        <text x="7" y="10" fontSize="8" fontWeight="500" fontFamily="Roboto, sans-serif" fill="#fff" textAnchor="middle">
          31
        </text>
      </svg>
    </SideApp>
    <SideApp $h={71}>
      <svg width="14" height="16" viewBox="0 0 14 16">
        <circle cx="7" cy="6.500" r="6.2" fill="#fbc511" />
        <path d="M4.500 7h5v7.500a1 1 0 0 1-1 1h-3a1 1 0 0 1-1-1z" fill="#f9a11b" />
        <circle cx="7" cy="8.500" r="2.3" fill="#fde3d4" />
      </svg>
    </SideApp>
    <SideApp $h={18}>
      <svg width="15" height="14" viewBox="0 0 15 14">
        <circle cx="7.500" cy="7" r="7" fill="#3a7ff2" />
        <path d="M4.500 7l2.200 2.200 4-4.500" fill="none" stroke="#fff" strokeWidth="1.4" />
      </svg>
    </SideApp>
    <SideApp $h={72}>
      <svg width="12" height="14" viewBox="0 0 12 14">
        <circle cx="6" cy="3" r="3" fill="#0b57d0" />
        <path d="M.5 14V11q0-4 5.500-4t5.500 4v3z" fill="#0b57d0" />
        <path d="M.5 11q0-4 3-4v7h-3z" fill="#6ba1f8" />
      </svg>
    </SideApp>
    <SideApp $h={18}>
      <svg width="12" height="15" viewBox="0 0 12 15">
        <path d="M0 6a6 6 0 0 1 4-5.700L6 6 2 9.500Q0 8 0 6z" fill="#ee4b6a" />
        <path d="M4 .3A6 6 0 0 1 12 6q0 1.800-1.500 3.800L6 6z" fill="#3f86f7" />
        <path d="M2 9.500L6 6l4.500 3.800L6 15z" fill="#1fb057" />
        <circle cx="6" cy="5.800" r="2.4" fill="#fff" />
      </svg>
    </SideApp>
    <SideApp $h={53}>
      <SideLine />
    </SideApp>
    <SideApp $h={20}>
      <Line d="M8 2.500v11M2.500 8h11" w={1.8} />
    </SideApp>
    <SideApp $h={20} $bottom>
      <Line d="M6 4l4 4-4 4" size={15} w={1.7} />
    </SideApp>
  </SidePanel>
);

const App = () => {
  return (
    <Screen>
      <GlobalStyle />
      <Browser />
      <Workspace>
        <Main>
          <Header />
          <Tools />
          <FormulaBar>
            <NameBox>
              DX2
              <Arrow />
            </NameBox>
            <Fx>fx</Fx>
            <FormulaText>AU</FormulaText>
            <FormulaHandle />
            <Summarise>
              <Spark />
              Summarise this data
            </Summarise>
          </FormulaBar>
          <Sheet />
          <HScroll>
            <HFrozen />
            <HThumb />
            <ScrollArrow $w={12} $h={8}>
              <Tri dir="left" />
            </ScrollArrow>
            <ScrollArrow $w={12} $h={8}>
              <Tri dir="right" />
            </ScrollArrow>
            <HEnd />
          </HScroll>
          <SheetTabs>
            <TabTools>
              <Line d="M8 3v10M3 8h10" size={18} />
              <Md.MdMenu size={17} />
            </TabTools>
            <SheetTab $w={83} $active>
              GLOBAL
              <Arrow />
            </SheetTab>
            {sheetTabs.map(([name, w, locked]) => (
              <SheetTab key={name} $w={w}>
                {locked && <Md.MdLock size={15} />}
                {name}
                <Arrow />
              </SheetTab>
            ))}
          </SheetTabs>
        </Main>
        <Side />
      </Workspace>
      <Taskbar>
        <TaskIcons>
          <TaskIcon><WindowsLogo /></TaskIcon>
          <TaskIcon><EdgeLogo /></TaskIcon>
          <TaskIcon $state="open"><FolderIcon /></TaskIcon>
          <TaskIcon $state="open"><SnipIcon /></TaskIcon>
          <TaskIcon $state="active"><Chrome badge="#0d8674" letter="M" /></TaskIcon>
          <TaskIcon $state="open"><Chrome badge="#0f86d3" letter="S" /></TaskIcon>
          <TaskIcon $state="open"><Chrome badge="#8d6e63" letter="H" /></TaskIcon>
          <TaskIcon $state="open"><Chrome badge="#e5173f" /></TaskIcon>
          <TaskIcon $state="open"><Chrome /></TaskIcon>
          <TaskIcon $state="open"><Chrome badge="#b3182b" /></TaskIcon>
          <TaskIcon $state="open"><Chrome badge="#ef6c00" letter="C" /></TaskIcon>
          <TaskIcon $state="open"><KeyboardApp /></TaskIcon>
          <TaskIcon $state="open"><NotepadIcon /></TaskIcon>
          <TaskIcon $state="open"><Chrome badge="#bf360c" letter="E" /></TaskIcon>
          <TaskIcon $state="open"><KakaoIcon /></TaskIcon>
          <TaskIcon $state="open"><ExcelIcon /></TaskIcon>
        </TaskIcons>
        <Clock>
          5:52 PM
          <br />
          8/25/2026
        </Clock>
      </Taskbar>
    </Screen>
  );
};

export default App;
